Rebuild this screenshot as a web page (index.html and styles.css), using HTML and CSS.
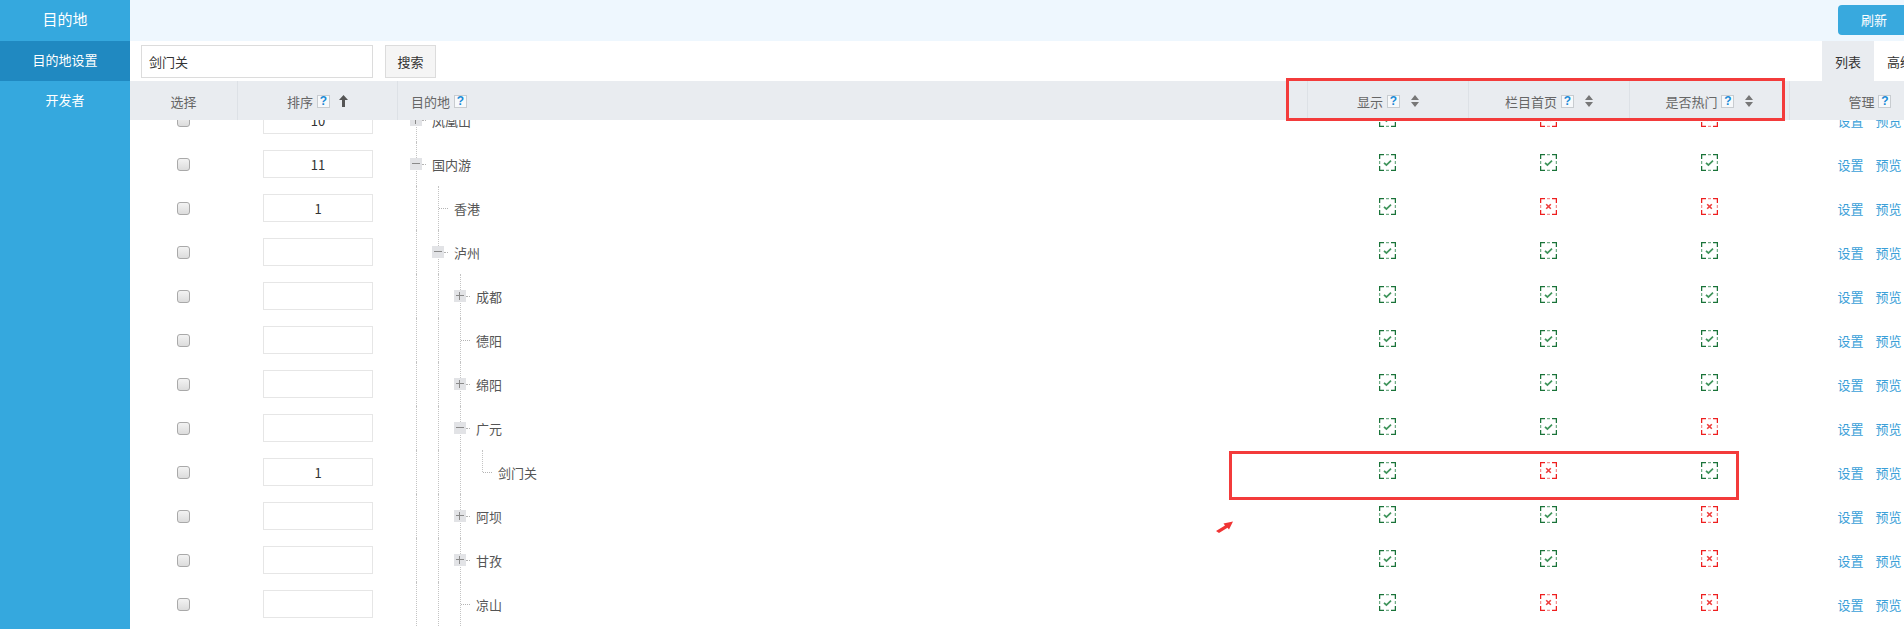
FILE: index.html
```
<!DOCTYPE html>
<html lang="zh-CN">
<head>
    <meta charset="UTF-8">
    <title>目的地设置</title>
    <link rel="stylesheet" href="styles.css">
</head>
<body>
<svg class="defs" width="0" height="0">
    <symbol id="yes" viewBox="0 0 17 17">
        <path d="M0.6 5V0.6H5M12 0.6H16.4V5M16.4 12V16.4H12M5 16.4H0.6V12" fill="none" stroke="#1a7339" stroke-width="1.3"/>
        <path d="M7 0.6H10M16.4 7V10M10 16.4H7M0.6 10V7" fill="none" stroke="#73ad88" stroke-width="1.3"/>
        <path d="M5 8.8L7.4 11L12 6.6" fill="none" stroke="#3f945b" stroke-width="1.7"/>
    </symbol>
    <symbol id="no" viewBox="0 0 17 17">
        <path d="M0.6 5V0.6H5M12 0.6H16.4V5M16.4 12V16.4H12M5 16.4H0.6V12" fill="none" stroke="#ee1f1f" stroke-width="1.3"/>
        <path d="M7 0.6H10M16.4 7V10M10 16.4H7M0.6 10V7" fill="none" stroke="#f58f8f" stroke-width="1.3"/>
        <path d="M6.2 6.2L10.8 10.8M10.8 6.2L6.2 10.8" fill="none" stroke="#ee3e3e" stroke-width="1.6"/>
    </symbol>
</svg>
<div class="page">
    <div class="sidebar">
        <div class="side-title">目的地</div>
        <div class="side-item active">目的地设置</div>
        <div class="side-item">开发者</div>
    </div>
    <div class="main">
        <div class="topbar">
            <button class="btn-refresh">刷新</button>
        </div>
        <div class="toolbar">
            <input class="search-input" type="text" value="剑门关">
            <button class="btn-search">搜索</button>
            <div class="tabs">
                <span class="tab current">列表</span>
                <span class="tab">高级</span>
            </div>
        </div>
        <div class="grid-head">
            <div class="hcell">选择</div>
            <div class="hcell">排序 <span class="help">?</span>
                <svg class="up" width="9" height="12" viewBox="0 0 9 12"><path d="M4.5 0L9 5H6V12H3V5H0Z" fill="#555"/></svg>
            </div>
            <div class="hcell left">目的地 <span class="help">?</span></div>
            <div class="hcell">显示 <span class="help">?</span>
                <svg class="sort" width="8" height="12" viewBox="0 0 8 12"><path d="M4 0L8 5H0ZM4 12L0 7H8Z" fill="#777"/></svg>
            </div>
            <div class="hcell">栏目首页 <span class="help">?</span>
                <svg class="sort" width="8" height="12" viewBox="0 0 8 12"><path d="M4 0L8 5H0ZM4 12L0 7H8Z" fill="#777"/></svg>
            </div>
            <div class="hcell">是否热门 <span class="help">?</span>
                <svg class="sort" width="8" height="12" viewBox="0 0 8 12"><path d="M4 0L8 5H0ZM4 12L0 7H8Z" fill="#777"/></svg>
            </div>
            <div class="hcell">管理 <span class="help">?</span></div>
        </div>
        <div class="grid-body">
            <div class="rows">
                <div class="row">
                    <div class="cell"><span class="check"></span></div>
                    <div class="cell"><input class="order" type="text" value="10"></div>
                    <div class="cell tree"><span class="ind line node"><i class="box plus"></i></span><span class="name">凤凰山</span></div>
                    <div class="cell"><svg class="flag"><use href="#yes"/></svg></div>
                    <div class="cell"><svg class="flag"><use href="#no"/></svg></div>
                    <div class="cell"><svg class="flag"><use href="#no"/></svg></div>
                    <div class="cell ops"><a>设置</a><a>预览</a></div>
                </div>
                <div class="row">
                    <div class="cell"><span class="check"></span></div>
                    <div class="cell"><input class="order" type="text" value="11"></div>
                    <div class="cell tree"><span class="ind line node"><i class="box minus"></i></span><span class="name">国内游</span></div>
                    <div class="cell"><svg class="flag"><use href="#yes"/></svg></div>
                    <div class="cell"><svg class="flag"><use href="#yes"/></svg></div>
                    <div class="cell"><svg class="flag"><use href="#yes"/></svg></div>
                    <div class="cell ops"><a>设置</a><a>预览</a></div>
                </div>
                <div class="row">
                    <div class="cell"><span class="check"></span></div>
                    <div class="cell"><input class="order" type="text" value="1"></div>
                    <div class="cell tree"><span class="ind line"></span><span class="ind line leaf"></span><span class="name">香港</span></div>
                    <div class="cell"><svg class="flag"><use href="#yes"/></svg></div>
                    <div class="cell"><svg class="flag"><use href="#no"/></svg></div>
                    <div class="cell"><svg class="flag"><use href="#no"/></svg></div>
                    <div class="cell ops"><a>设置</a><a>预览</a></div>
                </div>
                <div class="row">
                    <div class="cell"><span class="check"></span></div>
                    <div class="cell"><input class="order" type="text" value=""></div>
                    <div class="cell tree"><span class="ind line"></span><span class="ind line node"><i class="box minus"></i></span><span class="name">泸州</span></div>
                    <div class="cell"><svg class="flag"><use href="#yes"/></svg></div>
                    <div class="cell"><svg class="flag"><use href="#yes"/></svg></div>
                    <div class="cell"><svg class="flag"><use href="#yes"/></svg></div>
                    <div class="cell ops"><a>设置</a><a>预览</a></div>
                </div>
                <div class="row">
                    <div class="cell"><span class="check"></span></div>
                    <div class="cell"><input class="order" type="text" value=""></div>
                    <div class="cell tree"><span class="ind line"></span><span class="ind line"></span><span class="ind line node"><i class="box plus"></i></span><span class="name">成都</span></div>
                    <div class="cell"><svg class="flag"><use href="#yes"/></svg></div>
                    <div class="cell"><svg class="flag"><use href="#yes"/></svg></div>
                    <div class="cell"><svg class="flag"><use href="#yes"/></svg></div>
                    <div class="cell ops"><a>设置</a><a>预览</a></div>
                </div>
                <div class="row">
                    <div class="cell"><span class="check"></span></div>
                    <div class="cell"><input class="order" type="text" value=""></div>
                    <div class="cell tree"><span class="ind line"></span><span class="ind line"></span><span class="ind line leaf"></span><span class="name">德阳</span></div>
                    <div class="cell"><svg class="flag"><use href="#yes"/></svg></div>
                    <div class="cell"><svg class="flag"><use href="#yes"/></svg></div>
                    <div class="cell"><svg class="flag"><use href="#yes"/></svg></div>
                    <div class="cell ops"><a>设置</a><a>预览</a></div>
                </div>
                <div class="row">
                    <div class="cell"><span class="check"></span></div>
                    <div class="cell"><input class="order" type="text" value=""></div>
                    <div class="cell tree"><span class="ind line"></span><span class="ind line"></span><span class="ind line node"><i class="box plus"></i></span><span class="name">绵阳</span></div>
                    <div class="cell"><svg class="flag"><use href="#yes"/></svg></div>
                    <div class="cell"><svg class="flag"><use href="#yes"/></svg></div>
                    <div class="cell"><svg class="flag"><use href="#yes"/></svg></div>
                    <div class="cell ops"><a>设置</a><a>预览</a></div>
                </div>
                <div class="row">
                    <div class="cell"><span class="check"></span></div>
                    <div class="cell"><input class="order" type="text" value=""></div>
                    <div class="cell tree"><span class="ind line"></span><span class="ind line"></span><span class="ind line node"><i class="box minus"></i></span><span class="name">广元</span></div>
                    <div class="cell"><svg class="flag"><use href="#yes"/></svg></div>
                    <div class="cell"><svg class="flag"><use href="#yes"/></svg></div>
                    <div class="cell"><svg class="flag"><use href="#no"/></svg></div>
                    <div class="cell ops"><a>设置</a><a>预览</a></div>
                </div>
                <div class="row">
                    <div class="cell"><span class="check"></span></div>
                    <div class="cell"><input class="order" type="text" value="1"></div>
                    <div class="cell tree"><span class="ind line"></span><span class="ind line"></span><span class="ind line"></span><span class="ind last leaf"></span><span class="name">剑门关</span></div>
                    <div class="cell"><svg class="flag"><use href="#yes"/></svg></div>
                    <div class="cell"><svg class="flag"><use href="#no"/></svg></div>
                    <div class="cell"><svg class="flag"><use href="#yes"/></svg></div>
                    <div class="cell ops"><a>设置</a><a>预览</a></div>
                </div>
                <div class="row">
                    <div class="cell"><span class="check"></span></div>
                    <div class="cell"><input class="order" type="text" value=""></div>
                    <div class="cell tree"><span class="ind line"></span><span class="ind line"></span><span class="ind line node"><i class="box plus"></i></span><span class="name">阿坝</span></div>
                    <div class="cell"><svg class="flag"><use href="#yes"/></svg></div>
                    <div class="cell"><svg class="flag"><use href="#yes"/></svg></div>
                    <div class="cell"><svg class="flag"><use href="#no"/></svg></div>
                    <div class="cell ops"><a>设置</a><a>预览</a></div>
                </div>
                <div class="row">
                    <div class="cell"><span class="check"></span></div>
                    <div class="cell"><input class="order" type="text" value=""></div>
                    <div class="cell tree"><span class="ind line"></span><span class="ind line"></span><span class="ind line node"><i class="box plus"></i></span><span class="name">甘孜</span></div>
                    <div class="cell"><svg class="flag"><use href="#yes"/></svg></div>
                    <div class="cell"><svg class="flag"><use href="#yes"/></svg></div>
                    <div class="cell"><svg class="flag"><use href="#no"/></svg></div>
                    <div class="cell ops"><a>设置</a><a>预览</a></div>
                </div>
                <div class="row">
                    <div class="cell"><span class="check"></span></div>
                    <div class="cell"><input class="order" type="text" value=""></div>
                    <div class="cell tree"><span class="ind line"></span><span class="ind line"></span><span class="ind line leaf"></span><span class="name">凉山</span></div>
                    <div class="cell"><svg class="flag"><use href="#yes"/></svg></div>
                    <div class="cell"><svg class="flag"><use href="#no"/></svg></div>
                    <div class="cell"><svg class="flag"><use href="#no"/></svg></div>
                    <div class="cell ops"><a>设置</a><a>预览</a></div>
                </div>
            </div>
        </div>
    </div>

    <!-- annotation marks drawn over the screenshot -->
    <div class="mark mark-head"></div>
    <div class="mark mark-row"></div>
    <svg class="mark-arrow" width="18" height="12" viewBox="0 0 18 12"><path d="M0 10L9 4.5L7.5 2.5L17 0.5L13 8.5L11.5 6.8L3 12Z" fill="#f03434"/></svg>
</div>
</body>
</html>
```
FILE: styles.css
```
body {
    margin: 0;
    overflow: hidden;
    font-family: "Noto Sans CJK SC", "Liberation Sans", sans-serif;
    font-size: 13px;
    color: #555;
    background: #fff;
}
.defs {
    position: absolute;
}
.page {
    position: relative;
    display: flex;
    width: 1950px;
    height: 629px;
}
.sidebar {
    width: 130px;
    flex-shrink: 0;
    background: #35a8de;
    color: #fff;
}
.side-title {
    height: 41px;
    line-height: 37px;
    text-align: center;
    font-size: 15px;
}
.side-item {
    height: 40px;
    line-height: 38px;
    text-align: center;
    font-size: 13px;
}
.side-item.active {
    background: #2089c1;
}
.main {
    flex: 1;
    display: flex;
    flex-direction: column;
    min-width: 0;
}
.topbar {
    height: 41px;
    background: #eef7fe;
    display: flex;
    align-items: center;
    justify-content: flex-end;
    padding-right: 40px;
}
.btn-refresh {
    width: 72px;
    height: 30px;
    margin-top: -2px;
    border: none;
    border-radius: 4px;
    background: #38a9de;
    color: #fff;
    font-family: inherit;
    font-size: 13px;
    line-height: 30px;
    padding: 0;
}
.toolbar {
    height: 40px;
    display: flex;
    align-items: center;
    padding-left: 11px;
}
.search-input {
    box-sizing: border-box;
    width: 232px;
    height: 33px;
    border: 1px solid #dcdcdc;
    padding: 0 7px;
    font-family: inherit;
    font-size: 13px;
    color: #333;
    outline: none;
}
.btn-search {
    box-sizing: border-box;
    width: 51px;
    height: 33px;
    margin-left: 12px;
    border: 1px solid #dcdcdc;
    background: #f5f5f5;
    color: #333;
    font-family: inherit;
    font-size: 13px;
    padding: 0;
}
.tabs {
    margin-left: auto;
    margin-right: 24px;
    display: flex;
    align-self: stretch;
}
.tab {
    width: 52px;
    display: flex;
    align-items: center;
    justify-content: center;
    color: #333;
}
.tab.current {
    background: #e9ecf0;
}
.grid-head,
.row {
    display: grid;
    grid-template-columns: 107px 160px 910px 161px 161px 160px 161px;
}
.grid-head {
    position: relative;
    z-index: 1;
    height: 39px;
    background: #e9ecf0;
    color: #666;
}
.hcell {
    display: flex;
    align-items: center;
    justify-content: center;
    padding-top: 1px;
    border-left: 1px solid #dde1e6;
    white-space: pre;
}
.hcell:first-child {
    border-left: none;
}
.hcell.left {
    justify-content: flex-start;
    padding-left: 13px;
}
.help {
    box-sizing: border-box;
    display: inline-flex;
    align-items: center;
    justify-content: center;
    width: 13px;
    height: 13px;
    margin-left: 1px;
    border: 1px solid #c8ccd0;
    background: #f7f9fb;
    color: #1a8ad6;
    font-family: "Liberation Sans", sans-serif;
    font-size: 12px;
    font-weight: bold;
    line-height: 1;
}
.up {
    margin-left: 9px;
}
.sort {
    margin-left: 11px;
}
.grid-body {
    flex: 1;
    overflow: hidden;
}
.rows {
    margin-top: -22px;
}
.row {
    height: 44px;
}
.cell {
    display: flex;
    align-items: center;
    justify-content: center;
}
.check {
    box-sizing: border-box;
    width: 13px;
    height: 13px;
    border: 1px solid #a9a9a9;
    border-radius: 3px;
    background: linear-gradient(#f3f3f3, #dcdcdc);
}
.order {
    box-sizing: border-box;
    width: 110px;
    height: 28px;
    margin-left: 2px;
    border: 1px solid #e6e6e6;
    text-align: center;
    font-family: inherit;
    font-size: 13px;
    color: #333;
    outline: none;
}
.cell.tree {
    justify-content: flex-start;
    align-items: stretch;
    padding-left: 13px;
}
.ind {
    position: relative;
    width: 22px;
    flex-shrink: 0;
}
.ind.line::before,
.ind.last::before {
    content: "";
    position: absolute;
    left: 6px;
    top: 0;
    bottom: 0;
    border-left: 1px dotted #c4c4c4;
}
.ind.last::before {
    bottom: 50%;
}
.ind.leaf::after,
.ind.node::after {
    content: "";
    position: absolute;
    left: 7px;
    top: 50%;
    width: 9px;
    border-top: 1px dotted #b4b4b4;
}
.ind.node::after {
    left: 12px;
    width: 4px;
}
.box {
    position: absolute;
    left: 0;
    top: 50%;
    width: 12px;
    height: 12px;
    margin-top: -6px;
    background: #e2e3e6;
}
.box::before,
.box.plus::after {
    content: "";
    position: absolute;
    left: 2px;
    top: 5px;
    width: 8px;
    height: 1px;
    background: #8a8a8a;
}
.box.plus::after {
    left: 5px;
    top: 2px;
    width: 1px;
    height: 8px;
}
.name {
    display: flex;
    align-items: center;
    color: #555;
}
.flag {
    width: 17px;
    height: 17px;
    margin-top: -3px;
}
.ops {
    gap: 12px;
}
.ops a {
    color: #3a9fd8;
}
.mark {
    position: absolute;
    z-index: 2;
    border: 3px solid #f33b3b;
}
.mark-head {
    left: 1286px;
    top: 78px;
    width: 493px;
    height: 37px;
}
.mark-row {
    left: 1229px;
    top: 451px;
    width: 504px;
    height: 43px;
}
.mark-arrow {
    position: absolute;
    z-index: 2;
    left: 1216px;
    top: 521px;
}
```
